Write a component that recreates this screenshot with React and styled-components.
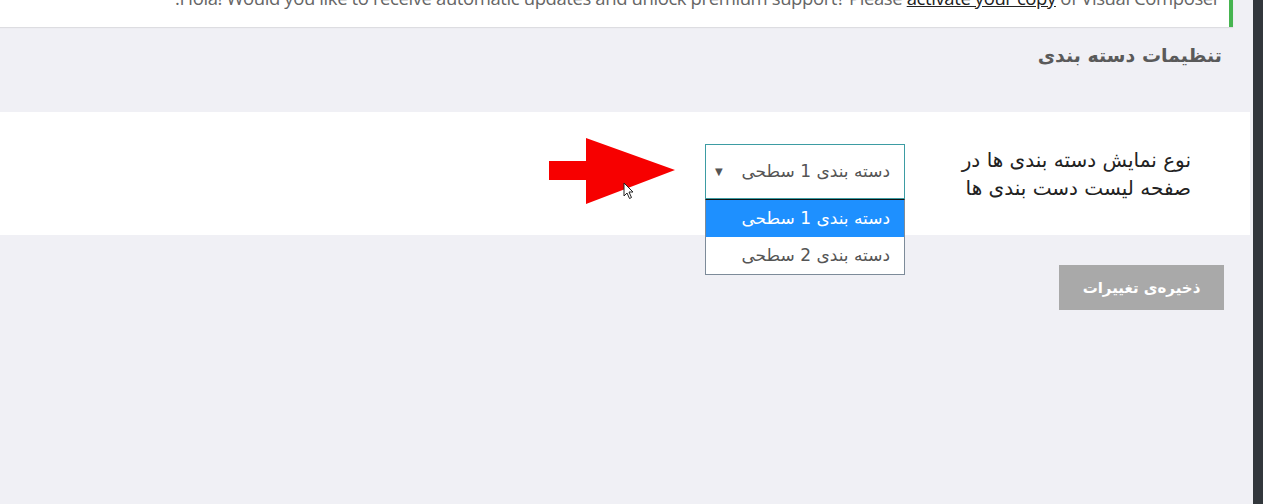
import React from 'react';
import styled, { createGlobalStyle } from 'styled-components';

const GlobalStyle = createGlobalStyle`
  html, body {
    margin: 0;
    padding: 0;
    height: 504px;
    overflow: hidden;
    background: #f0f0f5;
  }
  #root {
    height: 504px;
  }
`;

const persian = `"DejaVu Sans", "Noto Sans", sans-serif`;

const Page = styled.div`
  display: flex;
  height: 504px;
`;

const Main = styled.div`
  flex: 1;
  background: #f0f0f5;
  direction: rtl;
`;

const Sidebar = styled.div`
  width: 10px;
  background: #32373c;
`;

const Notice = styled.div`
  height: 27px;
  margin-right: 20px;
  background: #fff;
  border-right: 4px solid #46b450;
  box-shadow: 0 1px 1px rgba(0, 0, 0, 0.08);
  overflow: hidden;
  padding-right: 9px;
`;

const NoticeText = styled.p`
  margin: -14px 0 0;
  font-family: "Open Sans", "Liberation Sans", sans-serif;
  font-size: 18.5px;
  line-height: 24px;
  color: #666;
  white-space: nowrap;
  letter-spacing: -0.4px;
  a {
    color: #222;
    text-decoration: underline;
  }
`;

const Heading = styled.h2`
  margin: 0;
  padding: 16px 31px 0 0;
  height: 69px;
  box-sizing: content-box;
  font-family: ${persian};
  font-size: 19px;
  font-weight: bold;
  line-height: 24px;
  color: #5a5a5a;
`;

const SettingsRow = styled.div`
  display: flex;
  align-items: flex-start;
  height: 123px;
  margin-right: 3px;
  background: #fff;
  padding-right: 59px;
  box-sizing: border-box;
`;

const Label = styled.div`
  width: 230px;
  padding-top: 34px;
  font-family: ${persian};
  font-size: 20px;
  line-height: 28px;
  color: #222;
  white-space: nowrap;
`;

const Field = styled.div`
  display: flex;
  align-items: center;
  margin-right: 56px;
  margin-top: 26px;
`;

const SelectWrap = styled.div`
  position: relative;
  width: 200px;
`;

const SelectBox = styled.div`
  display: flex;
  align-items: center;
  justify-content: space-between;
  height: 55px;
  box-sizing: border-box;
  border: 1px solid #3d9ca3;
  padding: 0 14px 0 9px;
  background: #fff;
  font-family: ${persian};
  font-size: 17px;
  color: #555;
`;

const Caret = styled.span`
  font-size: 10px;
  color: #555;
`;

const OptionList = styled.div`
  position: absolute;
  top: 55px;
  right: 0;
  width: 200px;
  box-sizing: border-box;
  border: 1px solid #7d8b99;
  border-top: 1px solid #111;
  background: #fff;
  z-index: 2;
`;

const Option = styled.div`
  height: 37px;
  display: flex;
  align-items: center;
  padding-right: 14px;
  font-family: ${persian};
  font-size: 17px;
  background: ${p => (p.$active ? '#1e90ff' : '#fff')};
  color: ${p => (p.$active ? '#fff' : '#555')};
`;

const Pointer = styled.svg`
  margin-right: 30px;
  display: block;
`;

const Cursor = styled.svg`
  position: absolute;
  left: 74px;
  top: 44px;
`;

const ArrowBox = styled.div`
  position: relative;
`;

const Actions = styled.div`
  padding: 30px 29px 0 0;
`;

const SaveButton = styled.button`
  width: 165px;
  height: 45px;
  border: none;
  background: #a9a9a9;
  color: #fff;
  font-family: ${persian};
  font-size: 15px;
  font-weight: bold;
  cursor: pointer;
`;

const App = () => (
  <Page>
    <GlobalStyle />
    <Main>
      <Notice>
        <NoticeText>
          Hola! Would you like to receive automatic updates and unlock premium support? Please{' '}
          <a href="#">activate your copy</a> of Visual Composer.
        </NoticeText>
      </Notice>
      <Heading>تنظیمات دسته بندی</Heading>
      <SettingsRow>
        <Label>
          نوع نمایش دسته بندی ها در
          <br />
          صفحه لیست دست بندی ها
        </Label>
        <Field>
          <SelectWrap>
            <SelectBox>
              <span>دسته بندی 1 سطحی</span>
              <Caret>▼</Caret>
            </SelectBox>
            <OptionList>
              <Option $active>دسته بندی 1 سطحی</Option>
              <Option>دسته بندی 2 سطحی</Option>
            </OptionList>
          </SelectWrap>
          <ArrowBox>
            <Pointer width="126" height="66" viewBox="0 0 126 66">
              <polygon points="126,32 37,0 37,23 0,23 0,42 37,42 37,66" fill="#f70000" />
            </Pointer>
            <Cursor width="14" height="18" viewBox="0 0 14 18">
              <path d="M1 1 L1 14 L4 11 L6.5 16.5 L8.5 15.5 L6 10 L10 10 Z" fill="#fff" stroke="#222" strokeWidth="1" />
            </Cursor>
          </ArrowBox>
        </Field>
      </SettingsRow>
      <Actions>
        <SaveButton>ذخیره‌ی تغییرات</SaveButton>
      </Actions>
    </Main>
    <Sidebar />
  </Page>
);

export default App;
